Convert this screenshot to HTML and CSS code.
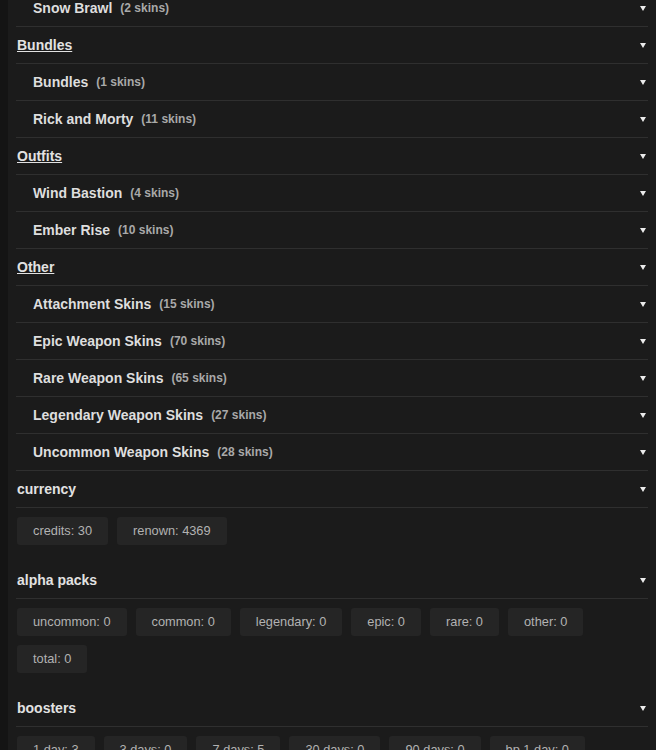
FILE: index.html
```html
<!DOCTYPE html>
<html>
<head>
<meta charset="utf-8">
<link rel="stylesheet" href="styles.css">
</head>
<body>
<div class="panel">
  <div class="row sub"><span class="name">Snow Brawl</span><span class="count">(2 skins)</span><span class="arrow"></span></div>
  <div class="row group"><span class="gname">Bundles</span><span class="arrow"></span></div>
  <div class="row sub"><span class="name">Bundles</span><span class="count">(1 skins)</span><span class="arrow"></span></div>
  <div class="row sub"><span class="name">Rick and Morty</span><span class="count">(11 skins)</span><span class="arrow"></span></div>
  <div class="row group"><span class="gname">Outfits</span><span class="arrow"></span></div>
  <div class="row sub"><span class="name">Wind Bastion</span><span class="count">(4 skins)</span><span class="arrow"></span></div>
  <div class="row sub"><span class="name">Ember Rise</span><span class="count">(10 skins)</span><span class="arrow"></span></div>
  <div class="row group"><span class="gname">Other</span><span class="arrow"></span></div>
  <div class="row sub"><span class="name">Attachment Skins</span><span class="count">(15 skins)</span><span class="arrow"></span></div>
  <div class="row sub"><span class="name">Epic Weapon Skins</span><span class="count">(70 skins)</span><span class="arrow"></span></div>
  <div class="row sub"><span class="name">Rare Weapon Skins</span><span class="count">(65 skins)</span><span class="arrow"></span></div>
  <div class="row sub"><span class="name">Legendary Weapon Skins</span><span class="count">(27 skins)</span><span class="arrow"></span></div>
  <div class="row sub"><span class="name">Uncommon Weapon Skins</span><span class="count">(28 skins)</span><span class="arrow"></span></div>

  <div class="row section"><span class="sname">currency</span><span class="arrow"></span></div>
  <div class="chips">
    <span class="chip">credits: 30</span>
    <span class="chip">renown: 4369</span>
  </div>

  <div class="row section"><span class="sname">alpha packs</span><span class="arrow"></span></div>
  <div class="chips">
    <span class="chip">uncommon: 0</span>
    <span class="chip">common: 0</span>
    <span class="chip">legendary: 0</span>
    <span class="chip">epic: 0</span>
    <span class="chip">rare: 0</span>
    <span class="chip">other: 0</span>
    <span class="chip">total: 0</span>
  </div>

  <div class="row section"><span class="sname">boosters</span><span class="arrow"></span></div>
  <div class="chips">
    <span class="chip">1 day: 3</span>
    <span class="chip">3 days: 0</span>
    <span class="chip">7 days: 5</span>
    <span class="chip">30 days: 0</span>
    <span class="chip">90 days: 0</span>
    <span class="chip">bp 1 day: 0</span>
  </div>
</div>
</body>
</html>
```

FILE: styles.css
```css
html, body {
  margin: 0;
  padding: 0;
  background: #141414;
  overflow: hidden;
}
body {
  padding-left: 8px;
  font-family: "Liberation Sans", Arial, sans-serif;
}
.panel {
  background: #1b1b1b;
  padding: 0 8px;
  margin-top: -10px;
  min-height: 800px;
}
.row {
  display: flex;
  align-items: center;
  height: 36px;
  border-bottom: 1px solid #2f2f2f;
}
.row.sub {
  padding-left: 17px;
}
.row.group, .row.section {
  padding-left: 1px;
}
.name {
  font-size: 14px;
  font-weight: bold;
  color: #dedede;
}
.count {
  font-size: 12px;
  font-weight: bold;
  color: #a9a9a9;
  margin-left: 8px;
}
.gname {
  font-size: 14px;
  font-weight: bold;
  color: #e2e2e2;
  text-decoration: underline;
}
.sname {
  font-size: 14px;
  font-weight: bold;
  color: #e2e2e2;
}
.arrow {
  margin-left: auto;
  margin-right: 2px;
  width: 0;
  height: 0;
  border-left: 3.5px solid transparent;
  border-right: 3.5px solid transparent;
  border-top: 5px solid #ececec;
}
.chips {
  display: flex;
  flex-wrap: wrap;
  gap: 9px 9px;
  padding: 9px 0 17px 1px;
}
.chip {
  display: inline-block;
  height: 28px;
  line-height: 28px;
  padding: 0 16px;
  background: #252525;
  border-radius: 3px;
  color: #b2b2b2;
  font-size: 12.8px;
}
```
